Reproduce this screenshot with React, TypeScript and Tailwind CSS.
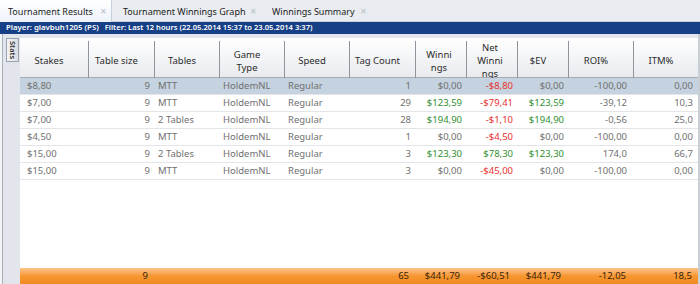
import React from 'react'

type Row = {
  stakes: string
  size: string
  tables: string
  game: string
  speed: string
  tags: string
  win: string
  net: string
  ev: string
  roi: string
  itm: string
}

const rows: Row[] = [
  { stakes: '$8,80', size: '9', tables: 'MTT', game: 'HoldemNL', speed: 'Regular', tags: '1', win: '$0,00', net: '-$8,80', ev: '$0,00', roi: '-100,00', itm: '0,00' },
  { stakes: '$7,00', size: '9', tables: 'MTT', game: 'HoldemNL', speed: 'Regular', tags: '29', win: '$123,59', net: '-$79,41', ev: '$123,59', roi: '-39,12', itm: '10,3' },
  { stakes: '$7,00', size: '9', tables: '2 Tables', game: 'HoldemNL', speed: 'Regular', tags: '28', win: '$194,90', net: '-$1,10', ev: '$194,90', roi: '-0,56', itm: '25,0' },
  { stakes: '$4,50', size: '9', tables: 'MTT', game: 'HoldemNL', speed: 'Regular', tags: '1', win: '$0,00', net: '-$4,50', ev: '$0,00', roi: '-100,00', itm: '0,00' },
  { stakes: '$15,00', size: '9', tables: '2 Tables', game: 'HoldemNL', speed: 'Regular', tags: '3', win: '$123,30', net: '$78,30', ev: '$123,30', roi: '174,0', itm: '66,7' },
  { stakes: '$15,00', size: '9', tables: 'MTT', game: 'HoldemNL', speed: 'Regular', tags: '3', win: '$0,00', net: '-$45,00', ev: '$0,00', roi: '-100,00', itm: '0,00' },
]

const headers = ['Stakes', 'Table size', 'Tables', 'Game Type', 'Speed', 'Tag Count', 'Winnings', 'Net Winnings', '$EV', 'ROI%', 'ITM%']

const cols = 'grid grid-cols-[68px_66px_65px_65px_65px_66px_51px_51px_51px_65px_65px]'

// money columns: green when positive, red when negative, gray at zero
function money(v: string) {
  if (v.startsWith('-')) return 'text-[#e8302c]'
  if (v === '$0,00') return 'text-[#707070]'
  return 'text-[#2f8f2f]'
}

function Tab({ label, active, width }: { label: string; active?: boolean; width: string }) {
  return (
    <div
      className={`flex items-center h-[22px] justify-between pr-[4px] ${width} ${
        active
          ? 'pl-[8px] bg-gradient-to-b from-[#ffffff] to-[#edf3fa] border-r border-[#c5cfdb]'
          : 'pl-[11px]'
      }`}
    >
      <span className="text-[#222] text-[9px]">{label}</span>
      <span className="text-[#b8bcc2] text-[8px]">✕</span>
    </div>
  )
}

export default function App() {
  return (
    <div
      className="w-[700px] h-[284px] flex flex-col bg-[#e9ecf0] overflow-hidden text-[9.5px] leading-none"
      style={{ fontFamily: '"Noto Sans", "Open Sans", sans-serif' }}
    >
      <div className="flex h-[22px] shrink-0 bg-[#e9ecf0] border-b border-[#c8d0da]">
        <Tab label="Tournament Results" active width="w-[112px]" />
        <Tab label="Tournament Winnings Graph" width="w-[149px]" />
        <Tab label="Winnings Summary" width="w-[110px]" />
      </div>

      <div className="h-[12px] shrink-0 bg-[#173f86] text-white font-semibold flex items-center pl-[6px] gap-[6px]">
        <span className="text-[7.8px]">Player: glavbuh1205 (PS)</span>
        <span className="text-[7.6px]">Filter: Last 12 hours (22.05.2014 15:37 to 23.05.2014 3:37)</span>
      </div>

      <div className="flex flex-1 min-h-0">
        <div className="w-[20px] shrink-0 flex bg-[#e2e6ec]">
          <div className="w-[3px] border-r border-[#a9b0b9] bg-[#f3f4f6]" />
          <div className="pt-[4px] pl-[3px]">
            <div className="w-[13px] h-[24px] border border-[#9aa3ae] bg-gradient-to-r from-[#f4f5f7] to-[#d9dde3] flex items-center justify-center">
              <span className="[writing-mode:vertical-rl] text-[7.5px] font-semibold text-[#333]">Stats</span>
            </div>
          </div>
        </div>

        <div className="flex-1 flex flex-col pt-[4px] bg-[#e2e6ec]">
          <div className="flex-1 flex flex-col bg-white">
            <div className={`${cols} h-[40px] bg-gradient-to-b from-[#ffffff] to-[#e8eaee] border-b border-[#a8adb4] shrink-0`}>
              {headers.map((h, i) => (
                <div key={h} className="flex items-center py-[3px]">
                  <div
                    className={`h-full flex-1 flex items-center justify-center text-center leading-[13px] text-[#2b2b2b] ${i > 0 ? 'border-l border-[#8f959c]' : ''} ${h === 'Winnings' || h === 'Net Winnings' ? 'pl-[8px] pr-[12px]' : 'pl-[2px] pr-[12px]'}`}
                  >
                    {h === 'Winnings' ? 'Winni ngs' : h === 'Net Winnings' ? 'Net Winni ngs' : h}
                  </div>
                </div>
              ))}
            </div>

            {rows.map((r, i) => (
              <div
                key={i}
                className={`${cols} h-[17px] items-center border-b border-[#e3e5e8] text-[#707070] ${i === 0 ? 'bg-[#c5d2df]' : 'bg-white'}`}
              >
                <div className="pl-[7px]">{r.stakes}</div>
                <div className="text-right pr-[4px]">{r.size}</div>
                <div className="pl-[4px]">{r.tables}</div>
                <div className="pl-[4px]">{r.game}</div>
                <div className="pl-[4px]">{r.speed}</div>
                <div className="text-right pr-[4px]">{r.tags}</div>
                <div className={`text-right pr-[4px] ${money(r.win)}`}>{r.win}</div>
                <div className={`text-right pr-[4px] ${money(r.net)}`}>{r.net}</div>
                <div className={`text-right pr-[4px] ${money(r.ev)}`}>{r.ev}</div>
                <div className="text-right pr-[6px]">{r.roi}</div>
                <div className="text-right pr-[5px]">{r.itm}</div>
              </div>
            ))}

            <div className="flex-1" />

            <div className={`${cols} h-[16px] items-center bg-gradient-to-b from-[#fcc488] via-[#f7962f] to-[#f38a1f] text-[#3a2408] shrink-0`}>
              <div />
              <div className="text-right pr-[6px]">9</div>
              <div />
              <div />
              <div />
              <div className="text-right pr-[6px]">65</div>
              <div className="text-right pr-[6px]">$441,79</div>
              <div className="text-right pr-[7px]">-$60,51</div>
              <div className="text-right pr-[7px]">$441,79</div>
              <div className="text-right pr-[7px]">-12,05</div>
              <div className="text-right pr-[6px]">18,5</div>
            </div>
          </div>
        </div>

        <div className="w-[2px] shrink-0 bg-[#c9ced5]" />
      </div>
    </div>
  )
}
